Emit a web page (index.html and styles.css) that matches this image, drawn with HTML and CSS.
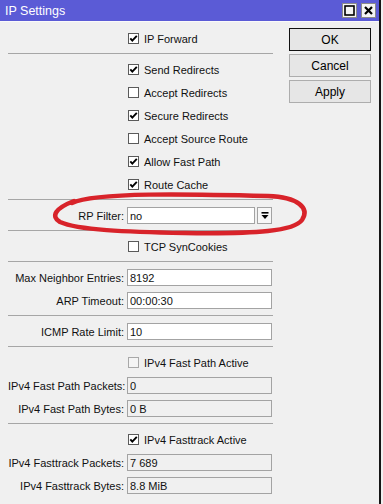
FILE: index.html
```html
<!DOCTYPE html>
<html lang="en">
<head>
    <meta charset="UTF-8">
    <meta name="viewport" content="width=device-width, initial-scale=1.0">
    <title>IP Settings</title>
    <link rel="stylesheet" href="styles.css">
</head>
<body>

    <div class="window">
        <div class="titlebar">
            <span class="title">IP Settings</span>
            <div class="title-btns">
                <span class="tb-btn">
                    <svg width="11" height="11" viewBox="0 0 11 11"><rect x="1" y="1" width="9" height="9" fill="none" stroke="#000" stroke-width="1.6"/></svg>
                </span>
                <span class="tb-btn">
                    <svg width="11" height="11" viewBox="0 0 11 11"><path d="M2 2L9 9M9 2L2 9" stroke="#000" stroke-width="2.2"/></svg>
                </span>
            </div>
        </div>

        <div class="content">
            <div class="form">
                <div class="row"><span></span><label class="check on"><span class="box"></span>IP Forward</label></div>
                <div class="sep"></div>

                <div class="row"><span></span><label class="check on"><span class="box"></span>Send Redirects</label></div>
                <div class="row"><span></span><label class="check"><span class="box"></span>Accept Redirects</label></div>
                <div class="row"><span></span><label class="check on"><span class="box"></span>Secure Redirects</label></div>
                <div class="row"><span></span><label class="check"><span class="box"></span>Accept Source Route</label></div>
                <div class="row"><span></span><label class="check on"><span class="box"></span>Allow Fast Path</label></div>
                <div class="row"><span></span><label class="check on"><span class="box"></span>Route Cache</label></div>
                <div class="sep"></div>

                <div class="row">
                    <span class="label">RP Filter:</span>
                    <div class="combo">
                        <input type="text" class="field" value="no">
                        <span class="drop">
                            <svg width="8" height="9" viewBox="0 0 8 9"><rect x="0.5" y="1" width="7" height="1.6"/><path d="M0.5 4h7L4 8z"/></svg>
                        </span>
                    </div>
                </div>
                <div class="sep"></div>

                <div class="row"><span></span><label class="check"><span class="box"></span>TCP SynCookies</label></div>
                <div class="sep"></div>

                <div class="row"><span class="label">Max Neighbor Entries:</span><input type="text" class="field" value="8192"></div>
                <div class="row"><span class="label">ARP Timeout:</span><input type="text" class="field" value="00:00:30"></div>
                <div class="sep"></div>

                <div class="row"><span class="label">ICMP Rate Limit:</span><input type="text" class="field" value="10"></div>
                <div class="sep"></div>

                <div class="row"><span></span><label class="check disabled"><span class="box"></span>IPv4 Fast Path Active</label></div>
                <div class="row"><span class="label">IPv4 Fast Path Packets:</span><input type="text" class="field readonly" value="0" readonly></div>
                <div class="row"><span class="label">IPv4 Fast Path Bytes:</span><input type="text" class="field readonly" value="0 B" readonly></div>
                <div class="sep"></div>

                <div class="row"><span></span><label class="check on"><span class="box"></span>IPv4 Fasttrack Active</label></div>
                <div class="row"><span class="label">IPv4 Fasttrack Packets:</span><input type="text" class="field readonly" value="7 689" readonly></div>
                <div class="row"><span class="label">IPv4 Fasttrack Bytes:</span><input type="text" class="field readonly" value="8.8 MiB" readonly></div>
            </div>

            <div class="actions">
                <button class="btn default">OK</button>
                <button class="btn">Cancel</button>
                <button class="btn">Apply</button>
            </div>
        </div>

        <!-- red marker circle drawn over the RP Filter row -->
        <svg class="marker" width="383" height="504" viewBox="0 0 383 504">
            <path d="M72 203 C95 192 190 194 268 196 C298 197 310 208 302 220 C294 231 258 234 185 233 C125 232 78 230 60 222 C50 216 56 208 74 201"
                  fill="none" stroke="#d8232a" stroke-width="4.5" stroke-linecap="round"/>
        </svg>
    </div>

</body>
</html>
```

FILE: styles.css
```css
body {
    margin: 0;
    background-color: #f0f0f0;
    font-family: "Liberation Sans", Arial, sans-serif;
    font-size: 11px;
    color: #000;
}
.window {
    position: relative;
    width: 379px;
    height: 504px;
    border-right: 2px solid #151515;
    background-color: #f0f0f0;
    overflow: hidden;
}
.titlebar {
    display: flex;
    align-items: center;
    justify-content: space-between;
    height: 21px;
    padding: 0 3px 0 5px;
    background-color: #5b5bd6;
    border-bottom: 1px solid #fafafa;
}
.title {
    color: white;
    font-size: 12.5px;
}
.title-btns {
    display: flex;
    gap: 4px;
}
.tb-btn {
    display: flex;
    align-items: center;
    justify-content: center;
    width: 13px;
    height: 13px;
    background-color: #f4f4f4;
    border: 1px solid #8a8a8a;
}
.content {
    display: flex;
}
.form {
    width: 265px;
    padding: 5px 0 0 8px;
}
.row {
    display: grid;
    grid-template-columns: 116px 145px;
    column-gap: 3px;
    align-items: center;
    height: 23px;
}
.label {
    text-align: right;
    white-space: nowrap;
    color: #111;
}
.check {
    display: flex;
    align-items: center;
    gap: 5px;
    padding-left: 1px;
    color: #111;
}
.box {
    width: 11px;
    height: 11px;
    box-sizing: border-box;
    border: 1px solid #5a5a5a;
    background-color: white;
}
.check.on .box {
    background: white url("data:image/svg+xml;utf8,<svg xmlns='http://www.w3.org/2000/svg' width='9' height='9' viewBox='0 0 9 9'><path d='M1.3 4.4l2 2.2L7.8 1.8' fill='none' stroke='black' stroke-width='1.9'/></svg>") center no-repeat;
}
.check.disabled .box {
    border-color: #a8a8a8;
    background-color: #f4f4f4;
}
.sep {
    height: 1px;
    margin: 3px 0 4px;
    background-color: #a6a6a6;
}
.field {
    width: 100%;
    height: 17px;
    box-sizing: border-box;
    margin: 0;
    padding: 0 2px;
    border: 1px solid #a3a3a3;
    background-color: white;
    font: inherit;
    color: #111;
    outline: none;
}
.field.readonly {
    background-color: #f0f0f0;
}
.combo {
    display: flex;
    gap: 2px;
}
.combo .field {
    width: 128px;
}
.drop {
    display: flex;
    align-items: center;
    justify-content: center;
    width: 15px;
    height: 17px;
    box-sizing: border-box;
    border: 1px solid #a3a3a3;
    background-color: #f7f7f7;
}
.actions {
    display: flex;
    flex-direction: column;
    gap: 3px;
    margin-left: 16px;
    padding-top: 6px;
}
.btn {
    width: 82px;
    height: 23px;
    padding: 0;
    border: 1px solid #adadad;
    background-color: #e6e6e6;
    font-family: "Liberation Sans", Arial, sans-serif;
    font-size: 12px;
    color: #000;
}
.btn.default {
    border-color: #111;
}
.marker {
    position: absolute;
    top: 0;
    left: 0;
    pointer-events: none;
}
```
